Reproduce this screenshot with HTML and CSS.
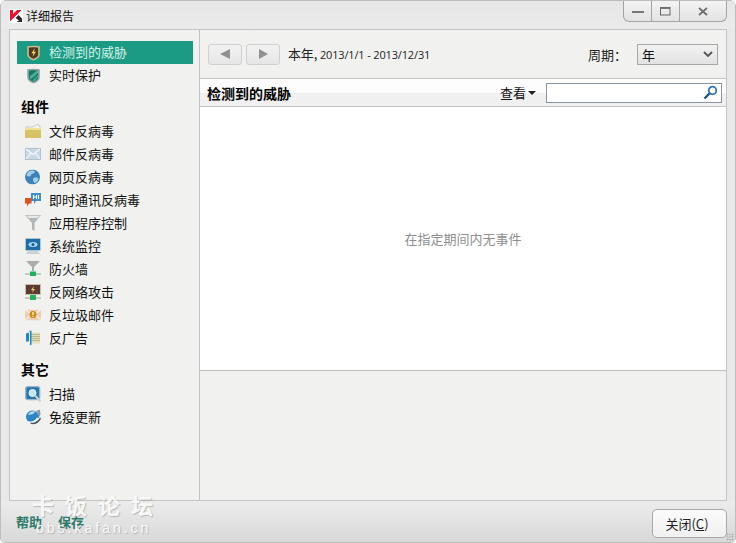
FILE: index.html
```html
<!DOCTYPE html>
<html lang="zh-CN">
<head>
<meta charset="utf-8">
<title>详细报告</title>
<link rel="stylesheet" href="styles.css">
</head>
<body>
<div class="window">
  <header class="titlebar">
    <div class="title">
      <svg class="logo" width="14" height="14" viewBox="0 0 14 14"><rect width="14" height="14" fill="#fff"/><path d="M1 1h3v4l4-4h4.500L1 12.500z" fill="#e8112d"/><path d="M6.500 9l3-3 3.500 3.500V13H7.500l2.500-1.500z" fill="#2a2a2a"/></svg>
      <span>详细报告</span>
    </div>
    <div class="controls">
      <div class="ctl ctl-min"><svg width="12" height="3" viewBox="0 0 12 3"><rect width="12" height="2" y="1" fill="#777"/></svg></div>
      <div class="ctl ctl-max"><svg width="11" height="9" viewBox="0 0 11 9"><rect x=".5" y=".5" width="9.500" height="7.500" fill="none" stroke="#666"/><rect x=".5" y=".5" width="9.500" height="1.500" fill="#777"/></svg></div>
      <div class="ctl ctl-close"><svg width="10" height="9" viewBox="0 0 10 9"><path d="M1 1l8 7M9 1L1 8" stroke="#707070" stroke-width="1.800"/></svg></div>
    </div>
  </header>

  <div class="panel">
    <aside class="sidebar">
      <ul class="nav nav-top">
        <li class="item active">
          <svg class="ic ic-shield" width="13" height="15" viewBox="0 0 13 15"><path d="M1 1.500L6.500.8l5.500.7v7.500c0 2.500-3 4.300-5.500 5.300C4 13.300 1 11.500 1 9z" fill="#4e3a22" stroke="#cdbd92" stroke-width="1.600"/><path d="M7.800 2.800L4.500 7.800h2l-1 3.700 3.500-5.300H7z" fill="#f5d95c"/></svg>
          <span>检测到的威胁</span>
        </li>
        <li class="item">
          <svg class="ic ic-shield" width="13" height="15" viewBox="0 0 13 15"><path d="M1 1.500L6.500.8l5.500.7v7.500c0 2.500-3 4.300-5.500 5.300C4 13.300 1 11.500 1 9z" fill="#127a66" stroke="#98a5ad" stroke-width="1.600"/><path d="M2.500 8l7-5.500H11v2L3.500 11zM5.500 12L11 6.500V8l-4 5z" fill="#4fae98"/></svg>
          <span>实时保护</span>
        </li>
      </ul>
      <h2 class="group">组件</h2>
      <ul class="nav">
        <li class="item">
          <svg class="ic" width="16" height="14" viewBox="0 0 16 14"><path d="M1 3l6 0 6-3 2 3v2H1z" fill="#f4f4ee" stroke="#b4b4a6" stroke-width=".6"/><path d="M0 4h16v10H0z" fill="#d6c464"/><path d="M0 4h16v2H0z" fill="#efe29c"/></svg>
          <span>文件反病毒</span>
        </li>
        <li class="item">
          <svg class="ic" width="16" height="12" viewBox="0 0 16 12"><rect width="15" height="11" x=".5" y=".5" fill="#c8d9e6" stroke="#aec1cf"/><path d="M1 1l7 5.500L15 1M1 11l5-6M15 11l-5-6" fill="none" stroke="#f6fafc" stroke-width="1.100"/></svg>
          <span>邮件反病毒</span>
        </li>
        <li class="item">
          <svg class="ic" width="15" height="15" viewBox="0 0 15 15"><circle cx="7.500" cy="7.500" r="7.500" fill="#3c82b9"/><path d="M3 2.500c3-2 6-2 7 0-1 2-3 1-4 3S3 7.500 1.500 5.500zM8.500 8.500c3-1 5 0 5 1-1 3-3 4-4 4-1-1-2-3-1-5z" fill="#a3cfe9"/></svg>
          <span>网页反病毒</span>
        </li>
        <li class="item">
          <svg class="ic" width="16" height="14" viewBox="0 0 16 14"><path d="M6 0h10v8h-5l-2 3V8H6z" fill="#3b8fd0"/><path d="M0 5h6.500v5.500H4l-2 3v-3H0z" fill="#d9541e"/><path d="M8.500 2v4M11.500 2v4M8.500 4h3M13.500 2v4" stroke="#fff" stroke-width="1.100" fill="none"/></svg>
          <span>即时通讯反病毒</span>
        </li>
        <li class="item">
          <svg class="ic" width="16" height="16" viewBox="0 0 16 16"><path d="M0 0h16L9.500 8v8L7 14.500V8z" fill="#b1b6b8"/><path d="M1 .8h14l-3 2.200H4z" fill="#e8eaea"/></svg>
          <span>应用程序控制</span>
        </li>
        <li class="item">
          <svg class="ic" width="16" height="16" viewBox="0 0 16 16"><rect x=".5" y=".5" width="15" height="12" rx="1" fill="#1d6da6" stroke="#b6c6ce"/><ellipse cx="8" cy="6.500" rx="4.500" ry="2.500" fill="#a9d6ee"/><circle cx="8" cy="6.500" r="1.500" fill="#1d5a85"/><path d="M3 13h10l2 3H1z" fill="#c8d2d6"/></svg>
          <span>系统监控</span>
        </li>
        <li class="item">
          <svg class="ic" width="16" height="16" viewBox="0 0 16 16"><path d="M1 0h14L9 6v4H7V6z" fill="#a9aeaa"/><path d="M0 12h16v2H0z" fill="#c2c8c4"/><rect x="5" y="10.500" width="6" height="4.500" fill="#22b060"/></svg>
          <span>防火墙</span>
        </li>
        <li class="item">
          <svg class="ic" width="16" height="16" viewBox="0 0 16 16"><rect x=".5" y=".5" width="15" height="10" fill="#5a3a32" stroke="#cdbca8"/><path d="M9 2L6 6h2L7 9l3-4H8z" fill="#f2d36a"/><path d="M0 13h16v2H0z" fill="#cfc6b6"/><rect x="5" y="11" width="6" height="5" fill="#22b060"/></svg>
          <span>反网络攻击</span>
        </li>
        <li class="item">
          <svg class="ic" width="16" height="11" viewBox="0 0 16 11"><rect width="16" height="11" fill="#edcfb8"/><path d="M0 11l6-6M16 11l-6-6M0 0l8 6 8-6" stroke="#fff" fill="none"/><circle cx="8" cy="5" r="3.500" fill="#c98f10"/><rect x="7.400" y="2.500" width="1.200" height="3" fill="#fff"/><rect x="7.400" y="6.300" width="1.200" height="1" fill="#fff"/></svg>
          <span>反垃圾邮件</span>
        </li>
        <li class="item">
          <svg class="ic ic-ad" width="14" height="15" viewBox="0 0 14 15"><rect x="5" y="2" width="9" height="11" fill="#e4dfb6"/><path d="M5 4h9M5 6h9M5 8h9M5 10h9" stroke="#b0aa82" stroke-width=".8"/><path d="M0 3l3-1V0h2.500v15L3 13.500V11H0z" fill="#1f88c4"/><rect x="3" y="1" width="1" height="13" fill="#e6eef2"/></svg>
          <span>反广告</span>
        </li>
      </ul>
      <h2 class="group group-other">其它</h2>
      <ul class="nav">
        <li class="item">
          <svg class="ic" width="16" height="16" viewBox="0 0 16 16"><rect x=".7" y=".7" width="14" height="13" rx="2" fill="#2777ad" stroke="#9db4c2" stroke-width="1.300"/><circle cx="7.500" cy="7" r="3.500" fill="#c4e4f2" stroke="#e8f4f8"/><path d="M10.500 10l5 5.500" stroke="#c9cfd3" stroke-width="2"/></svg>
          <span>扫描</span>
        </li>
        <li class="item">
          <svg class="ic ic-ad" width="15" height="15" viewBox="0 0 15 15"><circle cx="6.500" cy="7.500" r="6.500" fill="#2f86c6"/><path d="M2 5c1.500-3 5-4 7-3 0 2-5 4-7 3z" fill="#b6dcf0"/><path d="M0 11c4 2 9 1 11-3l3 1c-2 5-7 6-11 5z" fill="#f3f6f7"/><path d="M4 13c4 1 8-1 10-5l1 1c-2 5-7 6.500-10 5.500z" fill="#4a5660"/><path d="M10 1.500L14 0l.5 5-1.500 2.500c-.2-2.500-1.300-4.800-3-6z" fill="#8d979e"/></svg>
          <span>免疫更新</span>
        </li>
      </ul>
    </aside>

    <main class="content">
      <div class="toolbar">
        <div class="pager">
          <button class="navbtn" type="button" aria-label="上一个"><svg width="12" height="12" viewBox="0 0 12 12"><path d="M11 1v10L1 6z" fill="#909090"/></svg></button>
          <button class="navbtn" type="button" aria-label="下一个"><svg width="12" height="12" viewBox="0 0 12 12"><path d="M2 1v10l9-5z" fill="#909090"/></svg></button>
          <div class="range"><span class="range-cjk">本年,</span> 2013/1/1 - 2013/12/31</div>
        </div>
        <div class="period">
          <span class="period-label">周期：</span>
          <div class="select"><span>年</span><svg width="10" height="7" viewBox="0 0 10 7"><path d="M1 1l4 4 4-4" fill="none" stroke="#555" stroke-width="1.800"/></svg></div>
        </div>
      </div>
      <div class="subhead">
        <h1>检测到的威胁</h1>
        <div class="subhead-tools">
          <span class="view">查看<i class="caret"></i></span>
          <div class="search"><svg width="15" height="15" viewBox="0 0 15 15"><circle cx="9.500" cy="5.500" r="3.800" fill="none" stroke="#2f72b0" stroke-width="1.800"/><path d="M6.500 8.500L1.500 13.500" stroke="#24507f" stroke-width="2.400"/></svg></div>
        </div>
      </div>
      <div class="empty">在指定期间内无事件</div>
      <div class="details"></div>
    </main>
  </div>

  <footer class="footer">
    <div class="links"><a>帮助</a><a>保存</a></div>
    <button class="close" type="button">关闭(<u>C</u>)</button>
  </footer>

  <div class="watermark" aria-hidden="true">
    <div class="wm-big">卡饭论坛</div>
    <div class="wm-small">bbs.kafan.cn</div>
  </div>
  <div class="grip"></div>
</div>
</body>
</html>
```

FILE: styles.css
```css
* { box-sizing: border-box; }
html, body { margin: 0; padding: 0; height: 100%; }
body {
  width: 736px;
  height: 543px;
  overflow: hidden;
  font-family: "Noto Sans CJK SC", "Liberation Sans", sans-serif;
  font-size: 13px;
  color: #111;
}
ul { list-style: none; margin: 0; padding: 0; }
.window {
  position: relative;
  width: 736px;
  height: 543px;
  display: flex;
  flex-direction: column;
  background: #e9e9e9;
  border: 1px solid #bdbdbd;
  border-radius: 6px 6px 5px 5px;
  padding: 0 8px;
}
.titlebar {
  height: 28px;
  flex: none;
  display: flex;
  justify-content: space-between;
  background: linear-gradient(#e6e6e6, #ebebeb);
  margin: 0 -8px;
  padding: 0 8px;
}
.title {
  display: flex;
  align-items: center;
  gap: 3px;
  font-size: 12px;
  line-height: 14px;
  height: 29px;
}
.logo { display: block; }
.controls {
  width: 104px;
  height: 21px;
  display: flex;
  border: 1px solid #a4a4a4;
  border-top: 0;
  border-radius: 0 0 6px 6px;
  background: linear-gradient(#f4f4f4, #e2e2e2);
}
.ctl { display: flex; align-items: center; justify-content: center; border-right: 1px solid #a4a4a4; }
.ctl-min { width: 28px; }
.ctl-max { width: 28px; }
.ctl-close { flex: 1; border-right: 0; }
.panel {
  height: 472px;
  flex: none;
  display: flex;
  background: #f1f1ef;
  border: 1px solid #c4c4c4;
}
.sidebar {
  width: 190px;
  flex: none;
  border-right: 1px solid #c2c2c2;
  padding: 11px 6px 0 7px;
}
.item {
  height: 23px;
  display: flex;
  align-items: center;
  font-size: 13px;
  line-height: 23px;
  position: relative;
  padding-left: 32px;
}
.nav-top .item { padding-bottom: 2px; }
.ic { position: absolute; left: 8px; top: 50%; transform: translateY(-50%); }
.ic-shield { left: 10px; }
.ic-ad { left: 9px; }
.item.active { background: #1b9a84; color: #d8f3e8; }
.group {
  margin: 8px 0 0 4px;
  height: 24px;
  font-size: 14px;
  line-height: 22px;
  font-weight: 700;
  color: #000;
}
.group-other { margin-top: 9px; line-height: 23px; }
.content {
  flex: 1;
  display: flex;
  flex-direction: column;
  min-width: 0;
}
.toolbar {
  height: 49px;
  flex: none;
  display: flex;
  align-items: center;
  justify-content: space-between;
  padding: 0 8px;
  border-bottom: 1px solid #c4c4c4;
}
.pager { display: flex; align-items: center; gap: 4px; }
.navbtn {
  width: 34px;
  height: 21px;
  padding: 0;
  display: flex;
  align-items: center;
  justify-content: center;
  border: 1px solid #d0d0d0;
  border-radius: 3px;
  background: linear-gradient(#f2f2f2, #e6e6e6);
}
.range { margin-left: 4px; font-family: "Open Sans", "Noto Sans CJK SC", sans-serif; font-size: 11px; line-height: 16px; letter-spacing: -.15px; color: #222; }
.range-cjk { font-family: "Noto Sans CJK SC", sans-serif; font-size: 13px; }
.period { display: flex; align-items: center; gap: 10px; }
.period-label { font-size: 13px; color: #222; }
.select {
  width: 81px;
  height: 21px;
  padding: 0 4px;
  display: flex;
  align-items: center;
  justify-content: space-between;
  border: 1px solid #a8a8a8;
  background: linear-gradient(#f2f2f2, #e2e2e2);
  font-size: 13px;
}
.subhead {
  height: 28px;
  flex: none;
  display: flex;
  align-items: center;
  justify-content: space-between;
  padding: 0 0 0 7px;
  border-bottom: 1px solid #c4c4c4;
  background: linear-gradient(#fdfdfd 0, #fdfdfd 14px, #f0f0f0 14px, #f0f0f0 100%);
}
.subhead h1 { margin: 0; font-size: 14px; line-height: 16px; font-weight: 700; color: #000; }
.subhead-tools { display: flex; align-items: center; gap: 10px; margin-right: 4px; }
.view { display: flex; align-items: center; gap: 2px; font-size: 13px; }
.caret { width: 0; height: 0; border: 4px solid transparent; border-top: 4px solid #222; border-bottom: 0; }
.search {
  width: 176px;
  height: 20px;
  display: flex;
  align-items: center;
  justify-content: flex-end;
  padding-right: 3px;
  background: #fff;
  border: 1px solid #8a93a0;
}
.empty {
  height: 264px;
  flex: none;
  display: flex;
  align-items: center;
  justify-content: center;
  background: #fff;
  color: #8f8f8f;
  font-size: 13px;
  border-bottom: 1px solid #bcbcbc;
}
.details { flex: 1; background: #f1f1ef; }
.footer {
  flex: 1;
  display: flex;
  align-items: center;
  justify-content: space-between;
  margin: 0 -8px;
  padding: 0 8px 0 15px;
  background: linear-gradient(#ececec, #d8d8d8);
}
.links { display: flex; gap: 16px; margin-top: 0; }
.links a { font-size: 13px; font-weight: 700; color: #2d7a68; }
.close {
  width: 75px;
  height: 29px;
  padding: 0 5px 0 0;
  border: 1px solid #a8a8a8;
  border-radius: 5px;
  background: linear-gradient(#fbfbfb, #f0f0f0);
  font-family: inherit;
  font-size: 13px;
  color: #222;
  margin-top: 3px;
}
.watermark {
  position: absolute;
  left: 31px;
  top: 488px;
  width: 130px;
  color: rgba(255, 255, 255, .9);
  text-shadow: 1px 1px 1px rgba(130, 130, 130, .45);
  pointer-events: none;
}
.wm-big { font-size: 22px; line-height: 30px; letter-spacing: 11px; font-weight: 700; white-space: nowrap; }
.wm-small { font-family: "Liberation Sans", sans-serif; font-size: 14px; line-height: 14px; letter-spacing: 3px; margin: 2px 0 0 4px; white-space: nowrap; }
.grip {
  position: absolute;
  right: 1px;
  bottom: 1px;
  width: 8px;
  height: 8px;
  background: radial-gradient(circle, #a8a8a8 0, #a8a8a8 .7px, transparent 1px) 0 0 / 2.600px 2.600px;
}
```
